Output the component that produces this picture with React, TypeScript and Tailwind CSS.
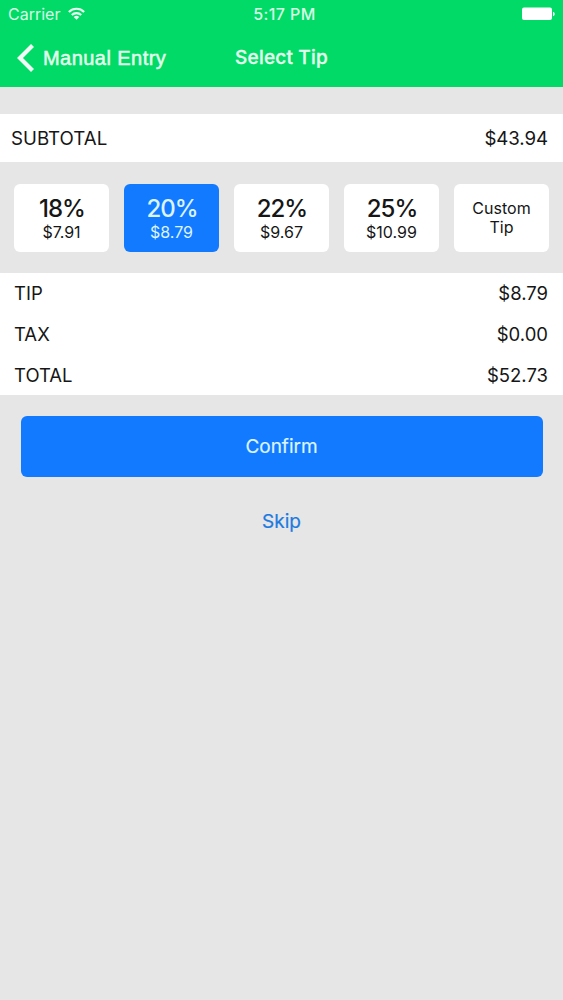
import { useState } from "react"

const tips = [
  { percent: "18%", amount: "$7.91" },
  { percent: "20%", amount: "$8.79" },
  { percent: "22%", amount: "$9.67" },
  { percent: "25%", amount: "$10.99" },
]

const totals = [
  { label: "TIP", value: "$8.79" },
  { label: "TAX", value: "$0.00" },
  { label: "TOTAL", value: "$52.73" },
]

const StatusBar = () => {
  return (
    <div className="grid h-7 grid-cols-3 items-center pl-[8px] pr-[8px] text-[#d6ffe6]">
      <div className="flex items-center gap-[8px]">
        <span className="text-[16px]">Carrier</span>
        <svg className="-mt-[1px]" width="17" height="13" viewBox="0 0 17 13" fill="none" stroke="#e9fff2" strokeWidth="2.2">
          <path d="M.9 4.9a10.7 10.7 0 0 1 15.2 0" />
          <path d="M3.8 8a6.6 6.6 0 0 1 9.4 0" />
          <path d="M8.5 12.8 5.7 10a4 4 0 0 1 5.6 0z" fill="#e9fff2" stroke="none" />
        </svg>
      </div>
      <span className="pl-[6px] text-center text-[16px] font-medium tracking-[0.4px]">5:17 PM</span>
      <svg className="justify-self-end" width="34" height="14" viewBox="0 0 34 14" fill="#fff">
        <rect x="1" y="0.5" width="30" height="12.5" rx="2" />
        <path d="M32 4.8c1.4.5 1.7 1.3 1.7 2.2s-.3 1.7-1.7 2.2z" />
      </svg>
    </div>
  )
}

const App = () => {
  const [selected, setSelected] = useState(1)

  return (
    <div className="min-h-[1000px] w-full bg-[#e6e6e7] font-['Inter',sans-serif] text-[#161616]">
      <header className="h-[87px] bg-[#02da67]">
        <StatusBar />
        <div className="grid h-[59px] grid-cols-3 items-center text-[#e4ffee]">
          <button className="flex items-center gap-[9px] pl-[17px]">
            <svg width="17" height="28" viewBox="0 0 17 28" fill="none" stroke="#f2fff7" strokeWidth="4.2">
              <path d="M15.5 1.5 3 14l12.5 12.5" />
            </svg>
            <span className="whitespace-nowrap pt-[1px] font-['Liberation_Sans',sans-serif] text-[20px] tracking-[0.45px] [-webkit-text-stroke:0.5px_currentColor]">
              Manual Entry
            </span>
          </button>
          <h1 className="pt-[2px] text-center text-[19px] font-medium tracking-[0.2px] [-webkit-text-stroke:0.3px_currentColor]">
            Select Tip
          </h1>
        </div>
      </header>

      <section className="mt-[27px] flex h-12 items-center justify-between bg-white pl-[11px] pr-[15px] pt-[2px] text-[18.7px]">
        <span>SUBTOTAL</span>
        <span className="tracking-[-0.1px]">$43.94</span>
      </section>

      <section className="flex h-[111px] items-center justify-between px-[14px]">
        {tips.map((tip, i) => (
          <button
            key={tip.percent}
            onClick={() => setSelected(i)}
            className={`flex h-[68px] w-[95px] flex-col items-center justify-center rounded-[6px] pt-[2px] ${
              selected === i ? "bg-[#127aff] text-[#dcf4ff]" : "bg-white"
            }`}
          >
            <span className="pl-[1px] text-[24px] leading-[27px] font-medium tracking-[-1px]">{tip.percent}</span>
            <span className="text-[16px] leading-[21px]">{tip.amount}</span>
          </button>
        ))}
        <button className="h-[68px] w-[95px] rounded-[6px] bg-white px-3 text-[16px] leading-[19px]">
          Custom Tip
        </button>
      </section>

      <section className="flex h-[122px] flex-col bg-white pl-[14px] pr-[15px] text-[18.5px]">
        {totals.map((row) => (
          <div key={row.label} className="flex flex-1 items-center justify-between pt-[2px]">
            <span>{row.label}</span>
            <span>{row.value}</span>
          </div>
        ))}
      </section>

      <section className="flex flex-col items-center px-[20.5px] pt-[21px]">
        <button className="h-[61px] w-full rounded-[6px] bg-[#127aff] pt-[2px] text-[19px] text-[#dcf4ff] [-webkit-text-stroke:0.2px_currentColor]">
          Confirm
        </button>
        <button className="mt-[31px] text-[19px] text-[#1c79e0] [-webkit-text-stroke:0.2px_currentColor]">Skip</button>
      </section>
    </div>
  )
}

export default App
